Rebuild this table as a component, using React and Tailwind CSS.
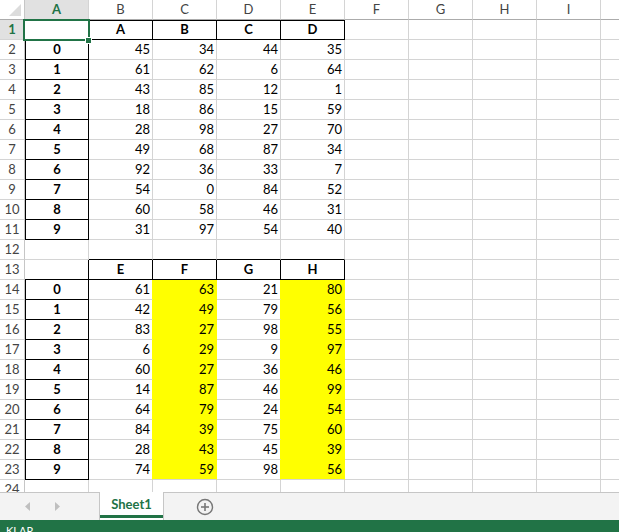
import React from "react";

const COLS = ["A", "B", "C", "D", "E", "F", "G", "H", "I", ""];
const T1 = [
  [45, 34, 44, 35], [61, 62, 6, 64], [43, 85, 12, 1], [18, 86, 15, 59], [28, 98, 27, 70],
  [49, 68, 87, 34], [92, 36, 33, 7], [54, 0, 84, 52], [60, 58, 46, 31], [31, 97, 54, 40],
];
const T2 = [
  [61, 63, 21, 80], [42, 49, 79, 56], [83, 27, 98, 55], [6, 29, 9, 97], [60, 27, 36, 46],
  [14, 87, 46, 99], [64, 79, 24, 54], [84, 39, 75, 60], [28, 43, 45, 39], [74, 59, 98, 56],
];

function isBlack(c, r) {
  if ((r === 1 || r === 13) && c >= 1 && c <= 4) return true;
  if (c === 0 && ((r >= 2 && r <= 11) || (r >= 14 && r <= 23))) return true;
  return false;
}
function isYellow(c, r) {
  return r >= 14 && r <= 23 && (c === 2 || c === 4);
}
function cellContent(c, r) {
  if (r === 1 && c >= 1 && c <= 4) return { t: ["A", "B", "C", "D"][c - 1], kind: "head" };
  if (r === 13 && c >= 1 && c <= 4) return { t: ["E", "F", "G", "H"][c - 1], kind: "head" };
  if (r >= 2 && r <= 11) {
    if (c === 0) return { t: String(r - 2), kind: "head" };
    if (c >= 1 && c <= 4) return { t: String(T1[r - 2][c - 1]), kind: "num" };
  }
  if (r >= 14 && r <= 23) {
    if (c === 0) return { t: String(r - 14), kind: "head" };
    if (c >= 1 && c <= 4) return { t: String(T2[r - 14][c - 1]), kind: "num" };
  }
  return null;
}

function Cell({ c, r }) {
  let right = "border-r-[#d4d4d4]";
  if (isBlack(c, r) || isBlack(c + 1, r)) right = "border-r-black";
  else if (isYellow(c, r) || isYellow(c + 1, r)) right = "border-r-[#ffff00]";
  let bottom = "border-b-[#d4d4d4]";
  if (isBlack(c, r) || isBlack(c, r + 1)) bottom = "border-b-black";
  else if (isYellow(c, r) && isYellow(c, r + 1)) bottom = "border-b-[#ffff00]";
  const extra = [];
  if (r === 1 && isBlack(c, r)) extra.push("border-t border-t-black");
  if (c === 0 && isBlack(c, r)) extra.push("border-l border-l-black");
  const bg = isYellow(c, r) ? "bg-[#ffff00]" : "bg-white";
  const content = cellContent(c, r);
  let align = "justify-end pr-[2px]";
  let weight = "font-normal";
  if (content && content.kind === "head") {
    align = "justify-center";
    weight = "font-bold";
  }
  return (
    <div
      className={`w-[64px] shrink-0 h-full border-r border-b ${right} ${bottom} ${extra.join(" ")} ${bg} flex items-end pb-[2px] ${align} ${weight} text-[13px] leading-[15px] text-black`}
    >
      {content ? content.t : ""}
    </div>
  );
}

function Row({ r }) {
  const sel = r === 1;
  return (
    <div className="flex h-[20px] shrink-0">
      <div
        className={`w-[25px] shrink-0 h-full border-r border-b border-r-[#c6c6c6] border-b-[#d4d4d4] flex items-center justify-center text-[13px] ${
          sel ? "bg-[#e1e1e1] text-[#217346] font-bold" : "bg-white text-[#444444]"
        }`}
      >
        {r}
      </div>
      {COLS.map((_, c) => (
        <Cell key={c} c={c} r={r} />
      ))}
    </div>
  );
}

export default function App() {
  const rows = [];
  for (let r = 1; r <= 24; r++) rows.push(<Row key={r} r={r} />);
  return (
    <div
      className="w-[619px] h-[532px] overflow-hidden flex flex-col bg-white"
      style={{ fontFamily: "Lato, 'Liberation Sans', sans-serif" }}
    >
      <div className="relative h-[492px] shrink-0 overflow-hidden">
        <div className="flex h-[20px]">
          <div className="w-[25px] shrink-0 h-full border-r border-b border-r-[#c6c6c6] border-b-[#ababab] bg-white relative">
            <svg width="24" height="19" className="absolute left-0 top-0">
              <polygon points="21,4 21,16 9,16" fill="#dcdcdc" />
            </svg>
          </div>
          {COLS.map((l, i) => (
            <div
              key={i}
              className={`w-[64px] shrink-0 h-full border-r border-b border-r-[#d4d4d4] border-b-[#ababab] flex items-center justify-center text-[13px] ${
                i === 0 ? "bg-[#e1e1e1] text-[#217346] font-bold" : "bg-white text-[#444444]"
              }`}
            >
              {l}
            </div>
          ))}
        </div>
        {rows}
        <div className="absolute left-[23px] top-[19px] w-[67px] h-[22px] border-2 border-[#217346] pointer-events-none" />
        <div className="absolute left-[85px] top-[37px] w-[7px] h-[7px] bg-[#217346] border border-white" />
      </div>
      <div className="h-[28px] shrink-0 flex bg-[#f3f3f3] border-t border-[#c6c6c6]">
        <div className="w-[99px] shrink-0 flex items-center pl-[25px] gap-[24px]">
          <svg width="6" height="9" viewBox="0 0 6 9">
            <polygon points="5,0 5,9 0,4.5" fill="#bfbfbf" />
          </svg>
          <svg width="6" height="9" viewBox="0 0 6 9">
            <polygon points="0,0 0,9 5,4.5" fill="#bfbfbf" />
          </svg>
        </div>
        <div className="-mt-px w-[65px] shrink-0 bg-white border-l border-r border-[#c6c6c6] flex flex-col">
          <div className="flex-1 flex items-center justify-center font-bold text-[13px] text-[#217346] pt-[2px]">
            Sheet1
          </div>
          <div className="h-[3px] bg-[#217346] mb-[2px]" />
        </div>
        <div className="flex items-center pl-[32px]">
          <svg width="18" height="18" viewBox="0 0 18 18">
            <circle cx="9" cy="9" r="7.5" fill="none" stroke="#777777" strokeWidth="1.4" />
            <line x1="9" y1="5" x2="9" y2="13" stroke="#777777" strokeWidth="1.6" />
            <line x1="5" y1="9" x2="13" y2="9" stroke="#777777" strokeWidth="1.6" />
          </svg>
        </div>
      </div>
      <div className="h-[22px] shrink-0 bg-[#217346] text-white text-[11px] flex items-center pl-[6px]">
        KLAR
      </div>
    </div>
  );
}
